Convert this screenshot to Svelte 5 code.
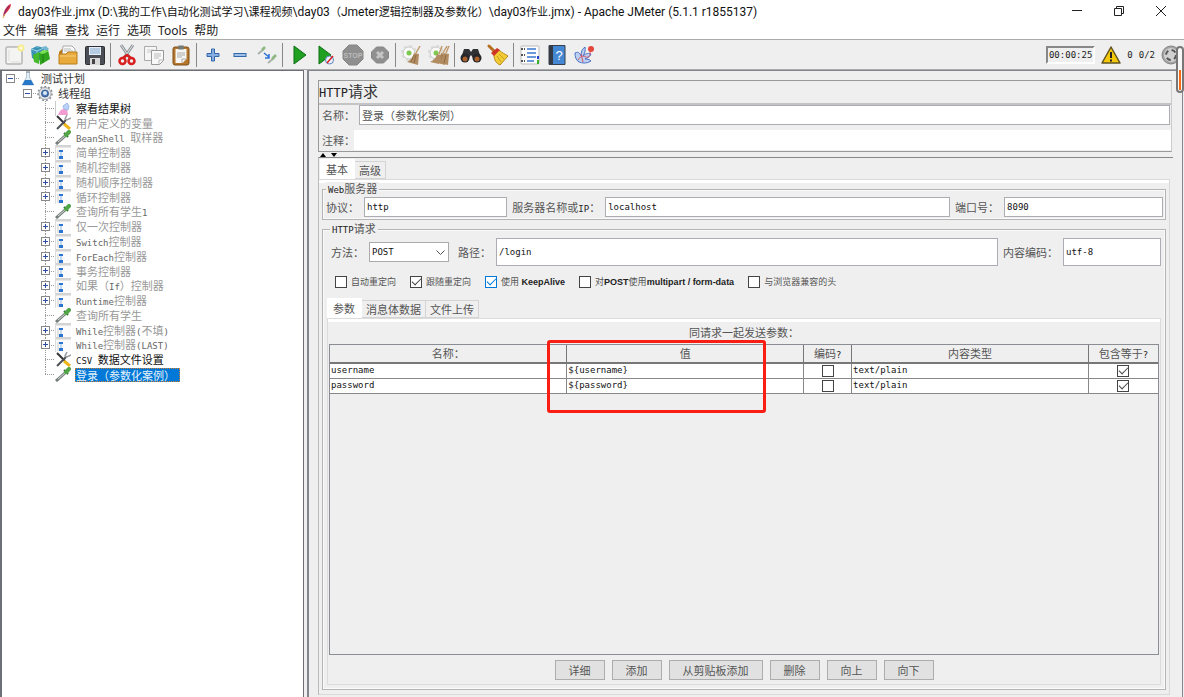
<script>
	const title = 'day03作业.jmx (D:\\我的工作\\自动化测试学习\\课程视频\\day03（Jmeter逻辑控制器及参数化）\\day03作业.jmx) - Apache JMeter (5.1.1 r1855137)';

	const menus = ['文件', '编辑', '查找', '运行', '选项', 'Tools', '帮助'];

	const toolGroups = [
		['new', 'templates', 'open', 'save'],
		['cut', 'copy', 'paste'],
		['expand', 'collapse', 'toggle'],
		['start', 'startNoPause', 'stop', 'shutdown'],
		['clear', 'clearAll'],
		['search', 'resetSearch'],
		['functions', 'help', 'whiteboard']
	];

	const tree = [
		{ text: '测试计划', level: 0, icon: 'flask', box: '-' },
		{ text: '线程组', level: 1, icon: 'gear', box: '-' },
		{ text: '察看结果树', level: 2, icon: 'results', state: 'on' },
		{ text: '用户定义的变量', level: 2, icon: 'config', state: 'off' },
		{ text: 'BeanShell 取样器', level: 2, icon: 'sampler', state: 'off' },
		{ text: '简单控制器', level: 2, icon: 'controller', state: 'off', box: '+' },
		{ text: '随机控制器', level: 2, icon: 'controller', state: 'off', box: '+' },
		{ text: '随机顺序控制器', level: 2, icon: 'controller', state: 'off', box: '+' },
		{ text: '循环控制器', level: 2, icon: 'controller', state: 'off', box: '+' },
		{ text: '查询所有学生1', level: 2, icon: 'sampler', state: 'off' },
		{ text: '仅一次控制器', level: 2, icon: 'controller', state: 'off', box: '+' },
		{ text: 'Switch控制器', level: 2, icon: 'controller', state: 'off', box: '+' },
		{ text: 'ForEach控制器', level: 2, icon: 'controller', state: 'off', box: '+' },
		{ text: '事务控制器', level: 2, icon: 'controller', state: 'off', box: '+' },
		{ text: '如果（If）控制器', level: 2, icon: 'controller', state: 'off', box: '+' },
		{ text: 'Runtime控制器', level: 2, icon: 'controller', state: 'off', box: '+' },
		{ text: '查询所有学生', level: 2, icon: 'sampler', state: 'off' },
		{ text: 'While控制器(不填)', level: 2, icon: 'controller', state: 'off', box: '+' },
		{ text: 'While控制器(LAST)', level: 2, icon: 'controller', state: 'off', box: '+' },
		{ text: 'CSV 数据文件设置', level: 2, icon: 'config', state: 'on' },
		{ text: '登录（参数化案例）', level: 2, icon: 'sampler', state: 'selected' }
	];

	let options = $state([
		{ text: '自动重定向', checked: false },
		{ text: '跟随重定向', checked: true },
		{ text: '使用 KeepAlive', checked: true, focus: true },
		{ text: '对POST使用multipart / form-data', checked: false },
		{ text: '与浏览器兼容的头', checked: false }
	]);

	let params = $state([
		{ name: 'username', value: '${username}', encode: false, type: 'text/plain', equals: true },
		{ name: 'password', value: '${password}', encode: false, type: 'text/plain', equals: true }
	]);

	const buttons = ['详细', '添加', '从剪贴板添加', '删除', '向上', '向下'];

	// Latin runs use their own face and size beside the Chinese glyphs
	function runs(text) {
		return text.match(/[\x20-\x7e]+|[^\x20-\x7e]+/g).map((t) => ({ t, latin: /^[\x20-\x7e]/.test(t) }));
	}
</script>

{#snippet mixed(text)}<span class="mixed">{#each runs(text) as run}{#if run.latin}<span class="latin">{run.t}</span>{:else}{run.t}{/if}{/each}</span>{/snippet}

{#snippet toolIcon(name)}
	<svg viewBox="0 0 22 22" width="22" height="22" aria-hidden="true">
		{#if name === 'new'}
			<rect x="3" y="3" width="16" height="17" rx="1" fill="#f4f4f2" stroke="#999" />
			<path d="M6 6v11M8 18h9" stroke="#ddd" />
			<circle cx="18" cy="4" r="3.500" fill="#f7ec91" /><circle cx="18" cy="4" r="1.500" fill="#fffde0" />
		{:else if name === 'templates'}
			<path d="M1 5l6-3 7 2v10l-6 3-6-3z" fill="#3a92b4" />
			<path d="M1 5l6 2 7-3M7 7v9" stroke="#9cd5e8" fill="none" />
			<path d="M5 3l3-1 1 2zM12 3l4-1 3 3-3 3z" fill="#74b8cf" />
			<path d="M3 11l6-3v12l-5-2z" fill="#45b82c" /><path d="M9 9l9-3 2 9-10 6z" fill="#2fa51d" />
			<path d="M9 9l4-3 6 1-6 3z" fill="#7ce154" /><path d="M13 10v9" stroke="#1d7d12" />
		{:else if name === 'open'}
			<path d="M2 8l3-3h13v13H2z" fill="#b97a14" /><path d="M6 2h9l3 3v8H5z" fill="#fafafa" stroke="#aaa" />
			<path d="M7 5h7M7 7h9" stroke="#bbb" />
			<path d="M2 10h7l2-2h9v12H2z" fill="#e8aa3c" stroke="#b97f1b" />
			<path d="M3 12h16" stroke="#f8cf7c" />
		{:else if name === 'save'}
			<rect x="1.500" y="2.500" width="19" height="18" rx="1" fill="#4b4f55" stroke="#2d2f33" />
			<rect x="5" y="3" width="12" height="8" fill="#e4eef8" /><path d="M6 5h10M6 7h10M6 9h10" stroke="#87a9cc" />
			<rect x="6" y="14" width="10" height="7" fill="#d9d9d9" /><rect x="8" y="15" width="3" height="5" fill="#444" />
		{:else if name === 'cut'}
			<path d="M5 1l9 13M17 1L8 14" stroke="#8e9398" stroke-width="3" />
			<path d="M5 1l9 13M17 1L8 14" stroke="#dfe3e6" stroke-width="1" />
			<ellipse cx="6.500" cy="17" rx="3" ry="3" fill="none" stroke="#d81e1e" stroke-width="2.500" />
			<ellipse cx="15.500" cy="17" rx="3" ry="3" fill="none" stroke="#d81e1e" stroke-width="2.500" />
			<path d="M7 14l4-3 4 3" stroke="#d81e1e" stroke-width="2.500" fill="none" />
		{:else if name === 'copy'}
			<path d="M1.500 2.500h12v14h-12z" fill="#f6f6f6" stroke="#aaa" /><path d="M4 6h7M4 8h7" stroke="#ccc" />
			<path d="M8.500 6.500h12v10l-4 4h-8z" fill="#f8f8f8" stroke="#999" />
			<path d="M11 10h7M11 12h7M11 14h5M20 16h-4v4" stroke="#bbb" fill="none" />
		{:else if name === 'paste'}
			<rect x="3" y="3" width="16" height="18" rx="2" fill="#b5762a" stroke="#80501a" />
			<path d="M5.500 5h11v10l-4 4h-7z" fill="#f6f6f4" /><rect x="8" y="1.500" width="6" height="4" rx="1" fill="#757a72" />
			<path d="M7 9h8M7 11h8M7 13h5M16 15h-4v4" stroke="#aaa" fill="none" />
		{:else if name === 'expand'}
			<path d="M9.500 5h3v4.500H17v3h-4.500V17h-3v-4.500H5v-3h4.500z" fill="#86aee0" stroke="#3467a8" />
		{:else if name === 'collapse'}
			<rect x="5" y="9.500" width="12" height="3" fill="#9fc1e9" stroke="#3467a8" />
		{:else if name === 'toggle'}
			<path d="M2 10l6-5M12 19l6-5" stroke="#a9b3ac" stroke-width="2" />
			<path d="M6 6l3-3M16 15l4-4" stroke="#8cb87f" stroke-width="2.500" />
			<path d="M8 9l5 4M13 10v4H9" stroke="#2b72d6" stroke-width="1.500" fill="none" />
		{:else if name === 'start'}
			<path d="M6 2l12 9-12 9z" fill="#20a020" stroke="#0d6f17" />
		{:else if name === 'startNoPause'}
			<path d="M4 2l12 9-12 9z" fill="#20a020" stroke="#0d6f17" />
			<circle cx="14.500" cy="16" r="4" fill="#eef3fa" stroke="#5b84ba" /><path d="M12 19l6-7" stroke="#d22" stroke-width="1.500" />
		{:else if name === 'stop'}
			<path d="M7 1h8l6 6v8l-6 6H7l-6-6V7z" fill="#8f8f8f" stroke="#858585" />
			<text x="11" y="14" text-anchor="middle" font-size="7" font-weight="bold" fill="#bbb">STOP</text>
		{:else if name === 'shutdown'}
			<path d="M7.500 3h7l5 5v6l-5 5h-7l-5-5V8z" fill="#8f8f8f" stroke="#858585" />
			<path d="M8 8l6 6M14 8l-6 6" stroke="#c4c4c4" stroke-width="3" />
		{:else if name === 'clear' || name === 'clearAll'}
			<circle cx="8" cy="9" r="6" fill="#f8f8f8" stroke="#c5c8c5" /><circle cx="8" cy="9" r="7" fill="none" stroke="#d8dad8" stroke-width="2" stroke-dasharray="3 2.500" />
			<circle cx="8" cy="9" r="2.500" fill="#7ec850" />
			<path d="M19 2l-4 7" stroke="#c09a6d" stroke-width="1.500" />
			<path d="M13 9l5 1-1 11-11-3c4-2 6-5 7-9z" fill="#b28c62" /><path d="M13 11l-3 7M15 11l-2 8" stroke="#8d6a44" />
			{#if name === 'clearAll'}
				<path d="M21 2l-3 7M14 2l-3 8" stroke="#c09a6d" stroke-width="1.500" />
				<path d="M16 9l5 1-1 11-8-2zM9 10l4 1-2 9-9-2c4-2 6-4 7-8z" fill="#b28c62" /><path d="M18 11l-2 8" stroke="#8d6a44" />
			{/if}
		{:else if name === 'search'}
			<path d="M4 5h5l2 3 2-3h5l3 9H13l-2-3-2 3H1z" fill="#303236" />
			<circle cx="5" cy="14" r="4.500" fill="#25272b" /><circle cx="17" cy="14" r="4.500" fill="#25272b" />
			<circle cx="5" cy="15" r="2.500" fill="#a9602b" /><circle cx="17" cy="15" r="2.500" fill="#a9602b" />
		{:else if name === 'resetSearch'}
			<path d="M2 2l6 6" stroke="#b56f20" stroke-width="3" stroke-linecap="round" />
			<path d="M7 11l5-5c3 3 6 4 9 6l-8 9c-4-2-6-5-6-10z" fill="#f2cd35" stroke="#ba8915" />
			<path d="M4 9l6-5 3 2-6 6z" fill="#cf3527" />
			<path d="M10 12l4 6M12 10l5 5" stroke="#c99b21" />
		{:else if name === 'functions'}
			<rect x="2" y="2" width="18" height="18" rx="1" fill="#fdfdfd" stroke="#bbb" />
			<path d="M2 5h4M2 11h4M2 17h4" stroke="#555" stroke-width="2" stroke-dasharray="2 1" />
			<path d="M8 5h9M8 9h9M8 13h9M8 17h7" stroke="#3a78d0" stroke-width="1.500" />
			<path d="M19 12v3" stroke="#2442d0" stroke-width="2" /><path d="M19 16v4" stroke="#35b32e" stroke-width="2" />
		{:else if name === 'help'}
			<path d="M3 1.500h16v19H3z" fill="#4487d3" stroke="#36404c" /><path d="M3 2h4v18H3z" fill="#343b45" />
			<text x="13" y="16" text-anchor="middle" font-size="13" fill="#fff">?</text>
		{:else}
			<path d="M2 9c4-2 5 1 6 3 0-4 1-7 4-9 1 4-1 7-2 9 3-3 6-3 8-2-1 3-4 4-6 5 2 0 4 0 6 2-5 3-9 2-12 1-3-2-4-5-4-9z" fill="#bcd0f2" stroke="#4a70c8" />
			<path d="M5 16c3-5 6-4 8-3s5-1 4-6M8 10l2 8" stroke="#d35468" fill="none" /><circle cx="18" cy="5" r="3" fill="#e4473b" />
		{/if}
	</svg>
{/snippet}

{#snippet treeIcon(name)}
	<svg viewBox="0 0 16 15" width="16" height="15" aria-hidden="true">
		{#if name === 'flask'}
			<path d="M6.500 1h3v5l4 8h-11l4-8z" fill="#e3eef7" stroke="#b3c5d4" stroke-width="1" />
			<path d="M5 9h6l3 5H2z" fill="#2878c9" /><path d="M6 1h4" stroke="#888" />
		{:else if name === 'gear'}
			<circle cx="8" cy="7.500" r="6" fill="#e4e6e9" stroke="#a3a7ac" />
			<circle cx="8" cy="7.500" r="7" fill="none" stroke="#8b9096" stroke-width="1.500" stroke-dasharray="2 2" />
			<circle cx="8" cy="7.500" r="3.500" fill="#4b79b8" stroke="#37598d" /><circle cx="8" cy="7" r="2" fill="#dce9f8" />
		{:else if name === 'results'}
			<path d="M.5 0v15" stroke="#ccc" />
			<path d="M3 14c2-5 4-7 9-6l1 6z" fill="#f19dd1" /><path d="M8 5l4-3 2 3-1 4-4-1z" fill="#b9d3f7" stroke="#9fb8ea" />
		{:else if name === 'config'}
			<path d="M2 1l8 8" stroke="#333" stroke-width="2" /><path d="M9 9l6 5" stroke="#edb51b" stroke-width="3" />
			<path d="M2 14l9-9" stroke="#4d5257" stroke-width="2" /><path d="M12 0l-2 4 2 1 4-2" stroke="#9a9da0" stroke-width="1.500" fill="none" />
		{:else if name === 'sampler'}
			<path d="M1 14l9-8" stroke="#777e7b" stroke-width="3" /><path d="M3 12l7-6" stroke="#d6dfda" />
			<path d="M9 3l4 4" stroke="#2b5f2d" stroke-width="2" /><path d="M11 5l3-3" stroke="#52a547" stroke-width="4" stroke-linecap="round" />
		{:else}
			<rect width="16" height="15" fill="#fbfbfb" /><path d="M0 1h16" stroke="#d3d3d3" stroke-width="3" />
			<path d="M.5 0v15" stroke="#ddd" /><path d="M3 5v9" stroke="#ccc" />
			<path d="M4 5h4v2H4zM4 11h4v3H4z" fill="#2b74d0" /><path d="M6 7v4" stroke="#8db5e9" />
		{/if}
	</svg>
{/snippet}

<div class="window">
	<header class="titlebar">
		<svg viewBox="0 0 12 16" width="12" height="16" aria-hidden="true">
			<path d="M11 1C7 2 4 7 3 13l3-3c3-3 5-6 5-9z" fill="#d22a3c" /><path d="M9 3c-3 3-4 6-5 10" stroke="#7d2d82" fill="none" />
			<path d="M5 11l-2 4" stroke="#e5a13c" />
		</svg>
		<h1>{@render mixed(title)}</h1>
		<div class="controls">
			<button aria-label="最小化"><svg viewBox="0 0 12 12" width="12" height="12"><path d="M1 5.500h10" stroke="#222" /></svg></button>
			<button aria-label="还原"><svg viewBox="0 0 12 12" width="12" height="12"><path d="M1.500 3.500h7v7h-7zM3.500 3V1.500h7v7H9" fill="none" stroke="#222" /></svg></button>
			<button aria-label="关闭"><svg viewBox="0 0 12 12" width="12" height="12"><path d="M1 1l10 10M11 1L1 11" stroke="#222" /></svg></button>
		</div>
	</header>

	<nav class="menubar">
		{#each menus as menu}
			<button>{menu}</button>
		{/each}
	</nav>

	<div class="toolbar">
		{#each toolGroups as group, i}
			{#if i > 0}<span class="separator"></span>{/if}
			{#each group as name}
				<button aria-label={name}>{@render toolIcon(name)}</button>
			{/each}
		{/each}
		<div class="status">
			<span class="timer">00:00:25</span>
			<svg viewBox="0 0 20 18" width="20" height="18" aria-hidden="true">
				<path d="M10 1l9 16H1z" fill="#f6c80c" stroke="#5f5420" stroke-width="1.500" stroke-linejoin="round" />
				<path d="M10 6v6M10 13.500v2" stroke="#222" stroke-width="2" />
			</svg>
			<span>0</span>
			<span>0/2</span>
			<svg viewBox="0 0 20 20" width="20" height="20" aria-hidden="true">
				<circle cx="10" cy="10" r="9" fill="#a4a4a4" stroke="#858585" /><circle cx="10" cy="10" r="7" fill="#d0d0d0" />
				<circle cx="10" cy="10" r="5" fill="none" stroke="#555" stroke-width="2" stroke-dasharray="4.500 3.350" />
			</svg>
		</div>
	</div>

	<div class="body">
		<aside>
			<ul>
				{#each tree as node}
					<li class="level{node.level} {node.state ?? ''}">
						<span class="branch">
							{#if node.box}
								<svg viewBox="0 0 9 9" width="9" height="9" aria-hidden="true">
									<rect x=".5" y=".5" width="8" height="8" fill="#fff" stroke="#888" />
									<path d={node.box === '+' ? 'M2 4.500h5M4.500 2v5' : 'M2 4.500h5'} stroke="#2d4f9e" />
								</svg>
							{/if}
						</span>
						{@render treeIcon(node.icon)}
						<span class="name">{@render mixed(node.text)}</span>
					</li>
				{/each}
			</ul>
		</aside>

		<main>
			<section class="summary">
				<h2>{@render mixed('HTTP请求')}</h2>
				<div class="line">
					<label for="name">名称：</label>
					<input id="name" class="cjk" value="登录（参数化案例）" />
				</div>
				<div class="line comment">
					<label for="comment">注释：</label>
					<input id="comment" class="plain" value="" />
				</div>
			</section>

			<div class="splitter">
				<svg viewBox="0 0 18 4" width="18" height="4" aria-hidden="true"><path d="M0 4l3-4 3 4zM11 0h6l-3 4z" fill="#000" /></svg>
			</div>

			<section class="editor">
				<div class="tabs">
					<button class="active">基本</button>
					<button>高级</button>
				</div>
				<div class="page">
					<fieldset>
						<legend>{@render mixed('Web服务器')}</legend>
						<div class="fields server">
							<label for="protocol">协议：</label>
							<input id="protocol" class="protocol" value="http" />
							<label for="server">{@render mixed('服务器名称或IP：')}</label>
							<input id="server" class="host" value="localhost" />
							<label for="port">端口号：</label>
							<input id="port" class="port" value="8090" />
						</div>
					</fieldset>

					<fieldset class="request">
						<legend>{@render mixed('HTTP请求')}</legend>
						<div class="fields path">
							<label for="method">方法：</label>
							<span class="select">
								<select id="method"><option>POST</option><option>GET</option></select>
								<svg viewBox="0 0 9 6" width="9" height="6" aria-hidden="true"><path d="M.5 .5l4 4 4-4" fill="none" stroke="#555" /></svg>
							</span>
							<label for="path">路径：</label>
							<input id="path" value="/login" />
							<label for="encoding">内容编码：</label>
							<input id="encoding" class="encoding" value="utf-8" />
						</div>

						<div class="options">
							{#each options as option}
								<label>
									<input type="checkbox" class:focus={option.focus} bind:checked={option.checked} />
									{@render mixed(option.text)}
								</label>
							{/each}
						</div>

						<div class="tabs inner">
							<button class="active">参数</button>
							<button>消息体数据</button>
							<button>文件上传</button>
						</div>
						<div class="params">
							<p>同请求一起发送参数：</p>
							<div class="grid">
								<table>
									<colgroup><col class="wide" /><col class="wide" /><col class="narrow" /><col class="wide" /><col /></colgroup>
									<thead>
										<tr>
											<th>名称：</th>
											<th>值</th>
											<th>{@render mixed('编码?')}</th>
											<th>内容类型</th>
											<th>{@render mixed('包含等于?')}</th>
										</tr>
									</thead>
									<tbody>
										{#each params as param}
											<tr>
												<td>{param.name}</td>
												<td>{param.value}</td>
												<td class="check"><input type="checkbox" aria-label="编码" bind:checked={param.encode} /></td>
												<td>{param.type}</td>
												<td class="check"><input type="checkbox" aria-label="包含等于" bind:checked={param.equals} /></td>
											</tr>
										{/each}
									</tbody>
								</table>
								<div class="highlight"></div>
							</div>
							<div class="buttons">
								{#each buttons as text}
									<button>{text}</button>
								{/each}
							</div>
						</div>
					</fieldset>
				</div>
			</section>
		</main>
	</div>

	<div class="meter"><span></span></div>
</div>

<style>
	:global(body) {
		overflow: hidden;
	}

	* {
		box-sizing: border-box;
		margin: 0;
		padding: 0;
	}

	.window {
		position: relative;
		display: flex;
		flex-direction: column;
		height: 100vh;
		background: #fff;
		color: #555;
		font: 11px/14px 'Noto Sans CJK SC', sans-serif;
		white-space: nowrap;
	}

	button, input, select {
		font: inherit;
		color: inherit;
		border: 0;
		background: none;
	}

	svg {
		display: block;
		flex: none;
	}

	.latin {
		font: 9px/11px 'DejaVu Sans Mono', monospace;
		color: #222;
	}

	.titlebar {
		display: flex;
		align-items: center;
		gap: 6px;
		height: 22px;
		flex: none;
	}

	h1 {
		font: 11px/20px 'Noto Sans CJK SC', sans-serif;
		color: #111;
	}

	h1 .latin {
		font: 12px/20px Roboto, sans-serif;
		color: #111;
	}

	.controls {
		display: flex;
		margin-left: auto;
		margin-right: 2px;
	}

	.controls button {
		display: flex;
		justify-content: center;
		width: 42px;
	}

	.menubar {
		display: flex;
		gap: 7px;
		height: 17px;
		padding-left: 3px;
		flex: none;
	}

	.menubar button {
		font: 12px/16px 'Noto Sans', 'Noto Sans CJK SC', sans-serif;
		color: #222;
	}

	.toolbar {
		display: flex;
		align-items: center;
		height: 31px;
		flex: none;
		background: #efefef;
		border-top: 1px solid #aaa;
		border-bottom: 1px solid #aaa;
	}

	.toolbar button {
		display: flex;
		justify-content: center;
		width: 27px;
	}

	.toolbar text {
		font-family: 'Liberation Sans', sans-serif;
	}

	.separator {
		width: 5px;
		height: 24px;
		border-left: 2px solid #efefef;
		border-right: 2px solid #efefef;
		background: #888;
	}

	.status {
		display: flex;
		align-items: center;
		gap: 6px;
		margin-left: auto;
		margin-right: 3px;
		font: 9px/14px 'DejaVu Sans Mono', monospace;
		color: #222;
	}

	.timer {
		padding: 0 1px;
		border: 2px solid;
		border-color: #888 #fff #fff #888;
	}

	.body {
		display: flex;
		flex: 1;
		min-height: 0;
		background: #efefef;
	}

	aside {
		width: 304px;
		flex: none;
		background: #fff;
		border: 1px solid #6e7078;
		border-width: 1px 1px 0 2px;
	}

	ul {
		display: grid;
		grid-auto-rows: minmax(0, 1fr);
		height: 311px;
		list-style: none;
	}

	li {
		display: flex;
		align-items: center;
		color: #333;
	}

	.branch {
		display: flex;
		align-items: center;
		width: 14px;
		height: 100%;
		flex: none;
		background: repeating-linear-gradient(90deg, #999 0 1px, transparent 1px 2px) 4px 7px / 10px 1px no-repeat;
	}

	.level0 {
		padding-left: 4px;
	}

	.level1 {
		padding-left: 21px;
	}

	.level2 {
		padding-left: 39px;
	}

	.level2 .branch {
		background: repeating-linear-gradient(90deg, #999 0 1px, transparent 1px 2px) 4px 7px / 10px 1px no-repeat, repeating-linear-gradient(#999 0 1px, transparent 1px 2px) 4px 0 / 1px 100% no-repeat;
	}

	.selected .branch {
		background: repeating-linear-gradient(90deg, #999 0 1px, transparent 1px 2px) 4px 7px / 10px 1px no-repeat, repeating-linear-gradient(#999 0 1px, transparent 1px 2px) 4px 0 / 1px 8px no-repeat;
	}

	.name {
		margin-left: 4px;
		padding: 0 1px;
	}

	.on {
		color: #111;
	}

	.off {
		color: #999;
	}

	.off .latin {
		color: #666;
	}

	.selected .name {
		padding-right: 5px;
		background: #0078d7;
		color: #e4f1fb;
		outline: 1px dotted #d08030;
		outline-offset: -1px;
	}

	main {
		display: flex;
		flex-direction: column;
		flex: 1;
		min-width: 0;
		margin: 0 1px 0 3px;
		padding: 9px 9px 2px;
		border: 1px solid #83868c;
		border-width: 1px 1px 0 2px;
	}

	.summary {
		margin-right: 1px;
		border: 1px solid #999;
		border-right-color: #ccc;
		flex: none;
	}

	h2 {
		height: 24px;
		border-bottom: 2px solid #c4c4c4;
		font-size: 15px;
		font-weight: normal;
		line-height: 20px;
		color: #333;
	}

	h2 .latin {
		font: 12px/20px 'DejaVu Sans Mono', monospace;
	}

	.line {
		display: flex;
		align-items: center;
		padding: 0 1px 5px 3px;
	}

	.line label {
		width: 37px;
	}

	.line.comment {
		padding: 0 0 1px 3px;
	}

	.comment label {
		width: 32px;
	}

	input:not([type='checkbox']) {
		flex: 1;
		min-width: 0;
		height: 20px;
		padding: 0 2px;
		background: #fff;
		border: 1px solid #abadb3;
		font: 9px/16px 'DejaVu Sans Mono', monospace;
		color: #111;
	}

	input.cjk:not([type='checkbox']) {
		font: 11px/16px 'Noto Sans CJK SC', sans-serif;
		color: #555;
	}

	input.plain:not([type='checkbox']) {
		border-color: #fff;
	}

	.splitter {
		height: 5px;
		padding: 1px 0 0 2px;
		flex: none;
	}

	.editor {
		display: flex;
		flex-direction: column;
		flex: 1;
		min-height: 0;
		border-top: 1px solid #888;
		border-left: 1px solid #bbb;
	}

	.tabs {
		display: flex;
		align-items: flex-end;
		height: 21px;
		padding: 1px 0 0 1px;
		flex: none;
	}

	.tabs button {
		height: 18px;
		padding: 0 4px;
		border: 1px solid #d4d4d4;
		border-left: 0;
		line-height: 16px;
	}

	.tabs .active {
		height: 20px;
		padding: 0 6px;
		background: #fff;
		border-color: #fff;
	}

	.page {
		display: flex;
		flex-direction: column;
		flex: 1;
		min-height: 0;
		margin-right: 3px;
		padding: 0 2px 4px;
		border: 1px solid #d9d9d9;
		border-width: 1px 1px 1px 0;
		box-shadow: inset 0 3px #fff;
	}

	fieldset {
		min-width: 0;
		margin: 2px 1px 0;
		border: 1px solid #b4b4b4;
		box-shadow: inset 0 0 0 1px #fafafa;
	}

	legend {
		margin-left: 3px;
		padding: 0 2px;
		line-height: 13px;
		background: #efefef;
	}

	.fields {
		display: flex;
		align-items: center;
		gap: 5px;
		padding: 1px 2px 1px 3px;
	}

	.fields.server {
		padding-bottom: 2px;
	}

	.server input.protocol {
		flex: 141;
	}

	.server input.host {
		flex: 348;
	}

	.server input.port {
		flex: 157;
	}

	.request {
		display: flex;
		flex-direction: column;
		flex: 1;
		min-height: 0;
		padding: 0 4px 4px 4px;
	}

	.fields.path {
		padding: 2px 0 0 4px;
	}

	.path input:not([type='checkbox']) {
		height: 28px;
	}

	.path input.encoding:not([type='checkbox']) {
		flex: none;
		width: 98px;
	}

	.select {
		position: relative;
		width: 80px;
		margin-right: 4px;
	}

	.select svg {
		position: absolute;
		right: 4px;
		top: 8px;
		pointer-events: none;
	}

	select {
		display: block;
		appearance: none;
		width: 100%;
		height: 20px;
		padding: 0 2px;
		background: #fff;
		border: 1px solid #aaa;
		font: 9px/16px 'DejaVu Sans Mono', monospace;
		color: #111;
	}

	.options {
		display: flex;
		align-items: center;
		gap: 14px;
		height: 31px;
		padding-left: 8px;
		flex: none;
		font-size: 9px;
	}

	.options label {
		display: flex;
		align-items: center;
		gap: 4px;
	}

	.options .latin {
		font: bold 9px/11px 'Liberation Sans', sans-serif;
	}

	input[type='checkbox'] {
		appearance: none;
		position: relative;
		width: 12px;
		height: 12px;
		background: #fff;
		border: 1px solid #444;
	}

	input[type='checkbox']:checked::after {
		content: '';
		position: absolute;
		left: 1px;
		top: 1px;
		width: 8px;
		height: 4px;
		border: solid #444;
		border-width: 0 0 1px 1px;
		transform: rotate(-45deg);
	}

	input.focus[type='checkbox'] {
		border-color: #0078d7;
	}

	input.focus[type='checkbox']:checked::after {
		border-color: #0078d7;
	}

	.inner {
		padding: 0;
	}

	.params {
		display: flex;
		flex-direction: column;
		flex: 1;
		min-height: 0;
		padding: 0 1px;
		border: 1px solid #dcdcdc;
		box-shadow: inset 0 3px #fff;
	}

	.params p {
		padding: 6px 0 5px;
		text-align: center;
	}

	.grid {
		position: relative;
		flex: 1;
		min-height: 0;
		border: 1px solid #8a8d93;
	}

	table {
		width: 100%;
		table-layout: fixed;
		border-collapse: collapse;
	}

	.wide {
		width: 28.6%;
	}

	.narrow {
		width: 5.8%;
	}

	th {
		height: 18px;
		font-weight: normal;
		border: 1px solid #777;
		border-width: 0 1px 2px;
		line-height: 15px;
	}

	td {
		height: 15px;
		padding: 0 1px;
		background: #fff;
		border: 1px solid #888;
		font: 9px/13px 'DejaVu Sans Mono', monospace;
		color: #111;
	}

	th:first-child, td:first-child {
		border-left: 0;
	}

	th:last-child, td:last-child {
		border-right: 0;
	}

	.check {
		text-align: center;
	}

	.check input {
		display: block;
		margin: 0 auto;
	}

	/* red frame over the value column */
	.highlight {
		position: absolute;
		left: 26.2%;
		top: -5px;
		width: 26.4%;
		height: 73px;
		border: 3px solid #f91d14;
		border-radius: 3px;
	}

	.buttons {
		display: flex;
		justify-content: center;
		gap: 7px;
		padding: 5px 0 4px;
	}

	.buttons button {
		height: 20px;
		padding: 0 13px;
		background: #e1e1e1;
		border: 1px solid #adadad;
		line-height: 16px;
	}

	.meter {
		position: absolute;
		right: 0;
		top: 46px;
		display: flex;
		align-items: flex-end;
		width: 8px;
		height: 47px;
		padding: 1px;
		background: #f7f7f7;
		border: 2px solid #777;
		border-radius: 4px;
	}

	.meter span {
		width: 100%;
		height: 50%;
		background: #f96a14;
	}
</style>
